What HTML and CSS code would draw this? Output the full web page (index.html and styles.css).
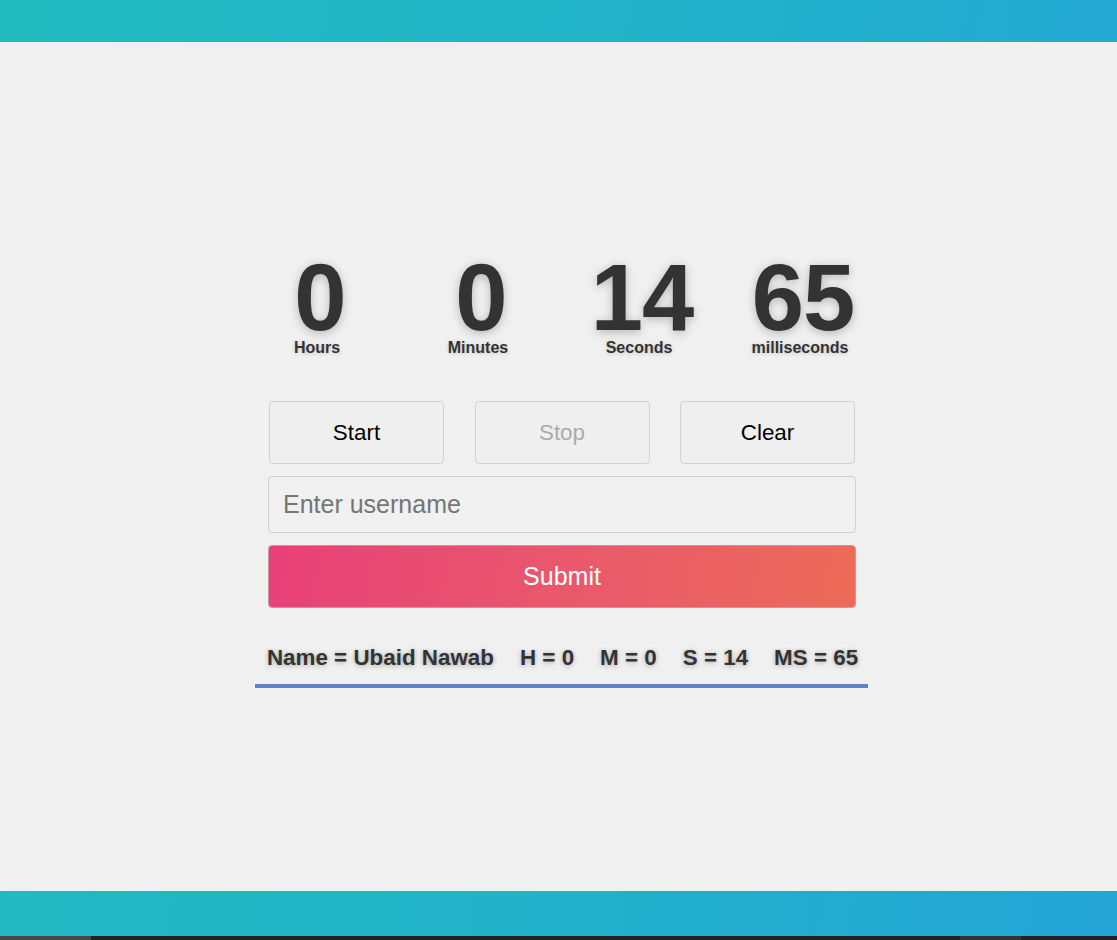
FILE: index.html
```html
<!DOCTYPE html>
<html lang="en">
<head>
<meta charset="utf-8">
<title>Stopwatch</title>
<link rel="stylesheet" href="styles.css">
</head>
<body>
  <header class="topbar"></header>
  <main class="main">
    <section class="timer">
      <div class="unit"><span class="num">0</span><span class="label">Hours</span></div>
      <div class="unit"><span class="num">0</span><span class="label">Minutes</span></div>
      <div class="unit"><span class="num">14</span><span class="label">Seconds</span></div>
      <div class="unit"><span class="num">65</span><span class="label">milliseconds</span></div>
    </section>
    <section class="panel">
      <div class="controls">
        <button class="btn">Start</button>
        <button class="btn" disabled>Stop</button>
        <button class="btn">Clear</button>
      </div>
      <input class="field" type="text" placeholder="Enter username">
      <button class="submit">Submit</button>
      <div class="result">
        <span>Name = Ubaid Nawab</span>
        <span>H = 0</span>
        <span>M = 0</span>
        <span>S = 14</span>
        <span>MS = 65</span>
      </div>
    </section>
  </main>
  <footer class="bottombar"></footer>
  <div class="taskbar"><span class="task-a"></span><span class="task-gap"></span><span class="task-b"></span><span class="task-rest"></span></div>
</body>
</html>
```

FILE: styles.css
```css
* { box-sizing: border-box; }
html, body { margin: 0; padding: 0; }
body {
  height: 940px;
  display: flex;
  flex-direction: column;
  font-family: "Liberation Sans", Arial, sans-serif;
  background: linear-gradient(100deg, #22bcc0 0%, #22b3c9 50%, #23a4d5 100%);
  overflow: hidden;
}
.topbar { height: 42px; flex: none; }
.main {
  flex: 1;
  background: #f0f0f0;
  padding-top: 216px;
}
.bottombar { height: 45px; flex: none; }
.taskbar { height: 4px; flex: none; display: flex; background: #222; }
.task-a { width: 91px; background: #474747; }
.task-gap { width: 869px; }
.task-b { width: 61px; background: #333; }

.timer {
  width: 644px;
  margin-left: calc(50% - 322px);
  display: grid;
  grid-template-columns: repeat(4, 1fr);
  color: #333;
}
.unit { display: flex; flex-direction: column; align-items: center; }
.num {
  font-size: 94px;
  font-weight: bold;
  letter-spacing: -1px;
  line-height: 80px;
  padding-left: 6px;
  text-shadow: 0 2px 10px rgba(0,0,0,0.25);
}
.label {
  font-size: 16px;
  font-weight: bold;
  line-height: 16px;
  margin-top: 2px;
  text-shadow: 0 1px 4px rgba(0,0,0,0.18);
}

.panel {
  width: 613px;
  margin-left: calc(50% - 303.5px);
  margin-top: 45px;
  padding: 0 12px 0 13px;
  display: flex;
  flex-direction: column;
}
.controls {
  display: flex;
  justify-content: space-between;
  padding: 0 1px;
}
.btn {
  width: 175px;
  height: 63px;
  border: 1px solid #d2d2d2;
  border-radius: 4px;
  background: #efefef;
  font-family: "Liberation Sans", Arial, sans-serif;
  font-size: 22.4px;
  color: #000;
}
.btn:disabled { color: #ababab; }
.field {
  margin-top: 12px;
  height: 57px;
  border: 1px solid #cfcfcf;
  border-radius: 4px;
  background: #f0f0f0;
  padding: 0 14px;
  font-family: "Liberation Sans", Arial, sans-serif;
  font-size: 25px;
  color: #333;
}
.field::placeholder { color: #757575; }
.submit {
  margin-top: 12px;
  height: 63px;
  border: 1px solid #c9959f;
  border-radius: 4px;
  background: linear-gradient(100deg, #e8407a 0%, #ea5a6a 55%, #ed6b58 100%);
  color: #fff;
  font-family: "Liberation Sans", Arial, sans-serif;
  font-size: 25px;
}
.result {
  margin: 37px -12px 0 -13px;
  padding: 0 0 14px 2px;
  border-bottom: 4px solid #5b84c4;
  display: flex;
  justify-content: center;
  gap: 26px;
  font-size: 22.4px;
  font-weight: bold;
  line-height: 25px;
  color: #333;
  text-shadow: 0 1px 5px rgba(0,0,0,0.3);
}
```
